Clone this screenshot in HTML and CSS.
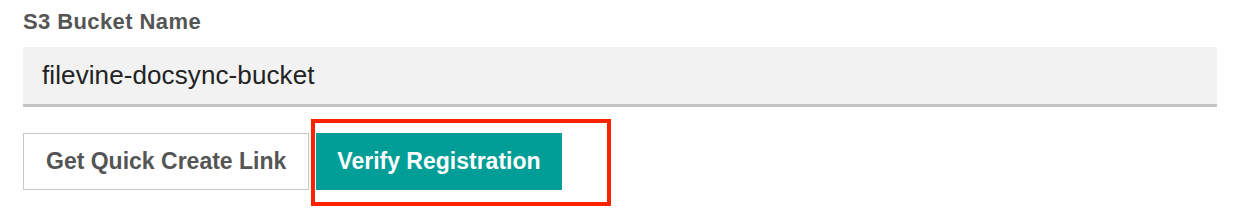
FILE: index.html
```html
<!DOCTYPE html>
<html lang="en">
<head>
<meta charset="UTF-8">
<meta name="viewport" content="width=device-width, initial-scale=1.0">
<title>S3 Bucket</title>
<link rel="stylesheet" href="styles.css">
</head>
<body>

<div class="container">
  <label class="field-label" for="bucket">S3 Bucket Name</label>
  <div class="field-input" id="bucket">filevine-docsync-bucket</div>
  <div class="actions">
    <button class="btn btn-outline">Get Quick Create Link</button>
    <span class="highlight-wrap">
      <button class="btn btn-primary">Verify Registration</button>
      <span class="highlight"></span>
    </span>
  </div>
</div>

</body>
</html>
```

FILE: styles.css
```css
  html, body {
    height: 100%;
  }
  body {
    margin: 0;
    background: #fff;
    font-family: "Liberation Sans", Arial, sans-serif;
  }
  .container {
    padding: 11px 27px 26px 23px;
  }
  .field-label {
    display: block;
    font-size: 22px;
    font-weight: bold;
    line-height: 22px;
    letter-spacing: 0.4px;
    color: #555;
  }
  .field-input {
    margin-top: 14px;
    height: 57px;
    line-height: 57px;
    padding-left: 19px;
    background-color: #f2f2f2;
    border-bottom: 3px solid #c4c4c4;
    font-size: 26px;
    letter-spacing: 0.1px;
    color: #222;
  }
  .actions {
    display: flex;
    align-items: center;
    gap: 7px;
    margin-top: 26px;
  }
  .btn {
    height: 57px;
    font-family: "Liberation Sans", Arial, sans-serif;
    font-size: 23px;
    font-weight: bold;
    cursor: pointer;
  }
  .btn-outline {
    padding: 0 22px;
    background-color: #fff;
    border: 1px solid #c8c8c8;
    color: #555;
  }
  .btn-primary {
    padding: 0 20px;
    background-color: #009e96;
    border: 1px solid #009e96;
    color: #fff;
  }
  .highlight-wrap {
    position: relative;
    display: flex;
  }
  .highlight {
    position: absolute;
    left: -5px;
    top: -14px;
    right: -49px;
    bottom: -16px;
    border: 4px solid #ff2200;
  }
```
